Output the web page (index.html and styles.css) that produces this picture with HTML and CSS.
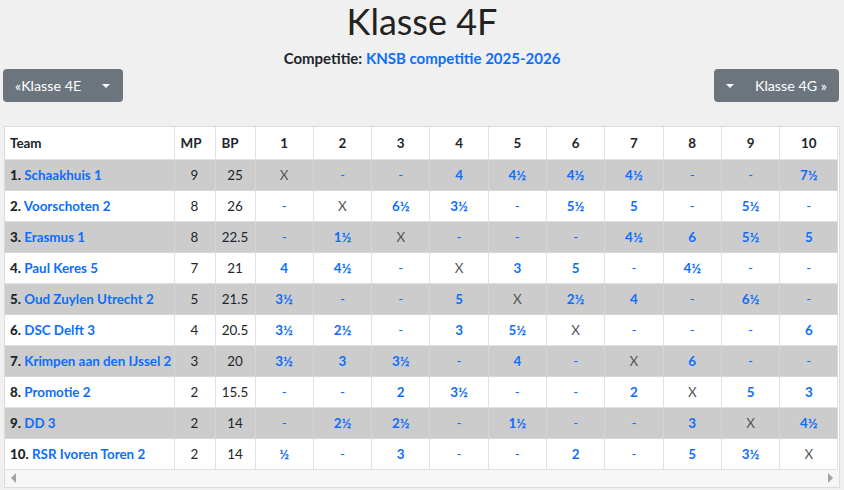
FILE: index.html
```html
<!DOCTYPE html>
<html lang="nl">
<head>
<meta charset="utf-8">
<title>Klasse 4F</title>
<link rel="stylesheet" href="styles.css">
</head>
<body>
<header class="head">
  <h1 class="title">Klasse 4F</h1>
  <p class="comp">Competitie: <a href="#" class="link">KNSB competitie 2025-2026</a></p>
</header>
<nav class="nav">
  <div class="btn-group prev">
    <a href="#" class="btn btn-main">«Klasse 4E</a>
    <span class="btn btn-caret"><span class="caret"></span></span>
  </div>
  <div class="btn-group next">
    <span class="btn btn-caret"><span class="caret"></span></span>
    <a href="#" class="btn btn-main">Klasse 4G »</a>
  </div>
</nav>
<div class="wrap">
  <table class="grid">
    <colgroup>
      <col class="c-team"><col class="c-mp"><col class="c-bp">
      <col span="10" class="c-r">
    </colgroup>
    <thead>
      <tr><th class="l">Team</th><th class="l">MP</th><th class="l">BP</th><th>1</th><th>2</th><th>3</th><th>4</th><th>5</th><th>6</th><th>7</th><th>8</th><th>9</th><th>10</th></tr>
    </thead>
    <tbody>
      <tr class="odd"><td class="team"><b>1.</b> <a href="#">Schaakhuis 1</a></td><td>9</td><td>25</td><td class="x">X</td><td class="d">-</td><td class="d">-</td><td class="s">4</td><td class="s">4½</td><td class="s">4½</td><td class="s">4½</td><td class="d">-</td><td class="d">-</td><td class="s">7½</td></tr>
      <tr><td class="team"><b>2.</b> <a href="#">Voorschoten 2</a></td><td>8</td><td>26</td><td class="d">-</td><td class="x">X</td><td class="s">6½</td><td class="s">3½</td><td class="d">-</td><td class="s">5½</td><td class="s">5</td><td class="d">-</td><td class="s">5½</td><td class="d">-</td></tr>
      <tr class="odd"><td class="team"><b>3.</b> <a href="#">Erasmus 1</a></td><td>8</td><td>22.5</td><td class="d">-</td><td class="s">1½</td><td class="x">X</td><td class="d">-</td><td class="d">-</td><td class="d">-</td><td class="s">4½</td><td class="s">6</td><td class="s">5½</td><td class="s">5</td></tr>
      <tr><td class="team"><b>4.</b> <a href="#">Paul Keres 5</a></td><td>7</td><td>21</td><td class="s">4</td><td class="s">4½</td><td class="d">-</td><td class="x">X</td><td class="s">3</td><td class="s">5</td><td class="d">-</td><td class="s">4½</td><td class="d">-</td><td class="d">-</td></tr>
      <tr class="odd"><td class="team"><b>5.</b> <a href="#">Oud Zuylen Utrecht 2</a></td><td>5</td><td>21.5</td><td class="s">3½</td><td class="d">-</td><td class="d">-</td><td class="s">5</td><td class="x">X</td><td class="s">2½</td><td class="s">4</td><td class="d">-</td><td class="s">6½</td><td class="d">-</td></tr>
      <tr><td class="team"><b>6.</b> <a href="#">DSC Delft 3</a></td><td>4</td><td>20.5</td><td class="s">3½</td><td class="s">2½</td><td class="d">-</td><td class="s">3</td><td class="s">5½</td><td class="x">X</td><td class="d">-</td><td class="d">-</td><td class="d">-</td><td class="s">6</td></tr>
      <tr class="odd"><td class="team"><b>7.</b> <a href="#">Krimpen aan den IJssel 2</a></td><td>3</td><td>20</td><td class="s">3½</td><td class="s">3</td><td class="s">3½</td><td class="d">-</td><td class="s">4</td><td class="d">-</td><td class="x">X</td><td class="s">6</td><td class="d">-</td><td class="d">-</td></tr>
      <tr><td class="team"><b>8.</b> <a href="#">Promotie 2</a></td><td>2</td><td>15.5</td><td class="d">-</td><td class="d">-</td><td class="s">2</td><td class="s">3½</td><td class="d">-</td><td class="d">-</td><td class="s">2</td><td class="x">X</td><td class="s">5</td><td class="s">3</td></tr>
      <tr class="odd"><td class="team"><b>9.</b> <a href="#">DD 3</a></td><td>2</td><td>14</td><td class="d">-</td><td class="s">2½</td><td class="s">2½</td><td class="d">-</td><td class="s">1½</td><td class="d">-</td><td class="d">-</td><td class="s">3</td><td class="x">X</td><td class="s">4½</td></tr>
      <tr><td class="team"><b>10.</b> <a href="#">RSR Ivoren Toren 2</a></td><td>2</td><td>14</td><td class="s">½</td><td class="d">-</td><td class="s">3</td><td class="d">-</td><td class="d">-</td><td class="s">2</td><td class="d">-</td><td class="s">5</td><td class="s">3½</td><td class="x">X</td></tr>
    </tbody>
  </table>
  <div class="hscroll">
    <span class="arr arr-l"></span>
    <span class="arr arr-r"></span>
  </div>
</div>
</body>
</html>
```

FILE: styles.css
```css
* { box-sizing: border-box; }
html, body { margin: 0; padding: 0; }
body {
  background: #f0f0f0;
  font-family: "Lato", "Noto Sans", sans-serif;
  color: #212529;
  font-size: 14px;
  width: 844px;
  height: 490px;
  overflow: hidden;
}
a { color: #0d6efd; text-decoration: none; }

.head { text-align: center; }
.title {
  margin: 0;
  padding-top: 0;
  font-size: 36px;
  font-weight: 400;
  line-height: 43.5px;
  color: #222;
}
.comp {
  margin: 4.5px 0 0;
  font-size: 15px;
  font-weight: 700;
  line-height: 20px;
}

.nav {
  display: flex;
  justify-content: space-between;
  padding: 0 5px 0 3px;
  margin-top: 1px;
}
.btn-group {
  display: flex;
  height: 33px;
  background: #6c757d;
  border-radius: 4px;
}
.prev { width: 120px; }
.next { width: 125px; }
.btn {
  display: flex;
  align-items: center;
  color: #fff;
  font-size: 14.3px;
  line-height: 20px;
}
.prev .btn-main { padding-left: 12px; }
.prev .btn-caret { margin-left: auto; padding-right: 13px; }
.next .btn-caret { padding-left: 12px; }
.next .btn-main { margin-left: auto; padding-right: 12px; }
.caret {
  width: 0; height: 0;
  border-left: 4px solid transparent;
  border-right: 4px solid transparent;
  border-top: 4px solid #fff;
}

.wrap {
  margin: 24px 4px 0 4px;
  border: 1px solid #dcdcdc;
  background: #fff;
  overflow: hidden;
}
.grid {
  border-collapse: collapse;
  table-layout: fixed;
  width: 833px;
  font-size: 13.4px;
}
.c-team { width: 169px; }
.c-mp { width: 41px; }
.c-bp { width: 40px; }
.c-r { width: 58.3px; }

.grid th, .grid td {
  border: 1px solid #dee2e6;
  padding: 0 5px;
  text-align: center;
  white-space: nowrap;
}
.grid tr > :first-child { border-left: 0; }
.grid thead th { border-top: 0; }
.grid th {
  height: 32px;
  font-weight: 700;
  color: #212529;
}
.grid th.l { text-align: left; }
.grid th.l + th.l { padding-left: 6px; }
.grid td { height: 31px; }
.grid tr.odd td { background: #cccccc; border-color: #d6d6d6; }
.grid td.team { text-align: left; font-weight: 700; }
.grid td.x { color: #555; }
.grid td.d { color: #0d6efd; }
.grid td.s { color: #0d6efd; font-weight: 700; }
.grid tbody tr:last-child td { border-bottom: 1px solid #dee2e6; }

.hscroll {
  height: 17px;
  background: #f7f7f7;
  display: flex;
  justify-content: space-between;
  align-items: center;
  padding: 0 6px;
}
.arr { width: 0; height: 0; border-top: 5px solid transparent; border-bottom: 5px solid transparent; }
.arr-l { border-right: 5px solid #a3a3a3; }
.arr-r { border-left: 5px solid #a3a3a3; }
```
